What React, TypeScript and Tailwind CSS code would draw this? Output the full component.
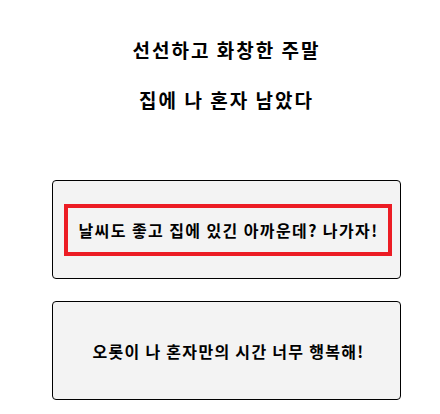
import React from 'react';

const font = { fontFamily: '"Noto Sans CJK KR", "Noto Sans", sans-serif' };

export default function App() {
  return (
    <div className="w-[440px] h-[414px] bg-white text-black" style={font}>
      <div className="pl-[52px] pr-[39px] pt-[36px] flex flex-col">
        <h2 className="text-center text-[19px] font-bold leading-[28px] tracking-[2px]">선선하고 화창한 주말</h2>
        <h2 className="text-center text-[19px] font-bold leading-[28px] tracking-[2px] mt-[22px]">집에 나 혼자 남았다</h2>

        <div className="mt-[66px] flex flex-col gap-[22px]">
          <button className="h-[99px] w-full rounded-[4px] border border-black bg-[#f3f3f3] flex items-center justify-center">
            <span className="ml-[3px] border-[4px] border-[#ec1c24] pl-[10px] pr-[9px] py-[9px] text-[16px] font-bold leading-[26px] tracking-[1.4px]">
              날씨도 좋고 집에 있긴 아까운데? 나가자!
            </span>
          </button>
          <button className="h-[99px] w-full rounded-[4px] border border-black bg-[#f3f3f3] flex items-center justify-center">
            <span className="ml-[4px] text-[16px] font-bold leading-[26px] tracking-[1.3px]">오롯이 나 혼자만의 시간 너무 행복해!</span>
          </button>
        </div>
      </div>
    </div>
  );
}
